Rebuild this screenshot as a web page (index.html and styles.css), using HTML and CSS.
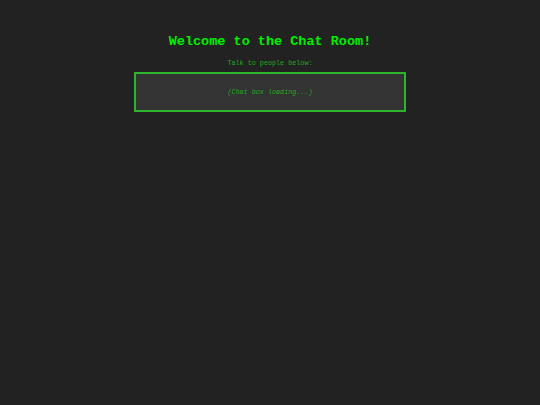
FILE: index.html
```html
<!DOCTYPE html>
<html>
<head>
<meta charset="utf-8">
<link rel="stylesheet" href="styles.css">
</head>
<body>
<div class="page">
  <h1 class="title">Welcome to the Chat Room!</h1>
  <p class="subtitle">Talk to people below:</p>
  <div class="chatbox"><span class="loading">(Chat box loading...)</span></div>
</div>
</body>
</html>
```
FILE: styles.css
```css
html, body {
  margin: 0;
  padding: 0;
  background: #222222;
  height: 100%;
}
body {
  font-family: "Courier New", "Liberation Mono", monospace;
}
.page {
  display: flex;
  flex-direction: column;
  align-items: center;
  padding-top: 34px;
}
.title {
  margin: 0;
  font-size: 13.5px;
  line-height: 16px;
  font-weight: bold;
  color: #00ee00;
}
.subtitle {
  margin: 9px 0 0 0;
  font-size: 6.75px;
  line-height: 9px;
  color: #22aa22;
}
.chatbox {
  box-sizing: border-box;
  margin-top: 4px;
  width: 272px;
  height: 40px;
  border: 2px solid #2cb52c;
  background: #333333;
  display: flex;
  align-items: center;
  justify-content: center;
}
.loading {
  font-size: 6.75px;
  font-style: italic;
  color: #22aa22;
}
```
